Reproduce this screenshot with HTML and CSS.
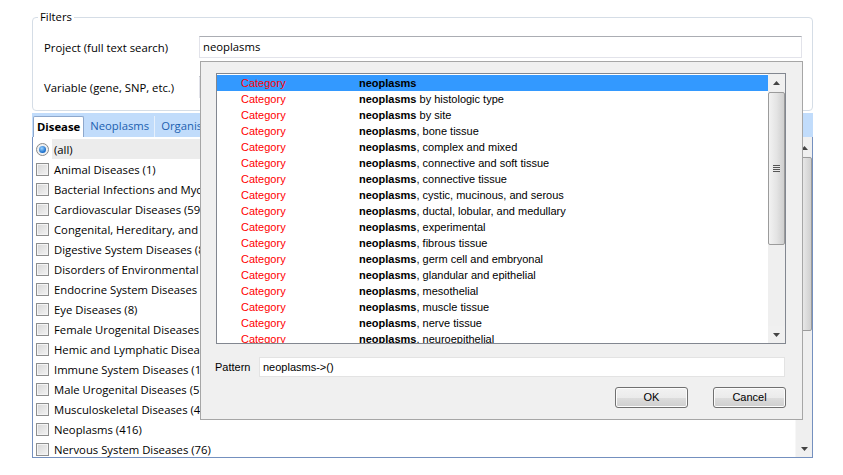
FILE: index.html
```html
<!DOCTYPE html>
<html>
<head>
<meta charset="utf-8">
<link rel="stylesheet" href="styles.css">
</head>
<body>
<div class="page">
  <fieldset class="filters">
    <legend>Filters</legend>
    <div class="frow first"><span class="flabel">Project (full text search)</span><div class="finput">neoplasms</div></div>
    <div class="frow"><span class="flabel">Variable (gene, SNP, etc.)</span><div class="finput"></div></div>
  </fieldset>

  <div class="tabs">
    <div class="tab active">Disease</div>
    <div class="tab">Neoplasms</div>
    <div class="tab">Organisms</div>
    <div class="tab">Chemicals and Drugs</div>
  </div>

  <div class="panel">
    <div class="clist">
      <div class="crow sel"><span class="radio"><span class="dot"></span></span><span class="ctext">(all)</span></div>
      <div class="crow"><span class="cb"></span><span class="ctext">Animal Diseases (1)</span></div>
      <div class="crow"><span class="cb"></span><span class="ctext">Bacterial Infections and Mycoses (12)</span></div>
      <div class="crow"><span class="cb"></span><span class="ctext">Cardiovascular Diseases (59)</span></div>
      <div class="crow"><span class="cb"></span><span class="ctext">Congenital, Hereditary, and Neonatal Diseases and Abnormalities (23)</span></div>
      <div class="crow"><span class="cb"></span><span class="ctext">Digestive System Diseases (85)</span></div>
      <div class="crow"><span class="cb"></span><span class="ctext">Disorders of Environmental Origin (3)</span></div>
      <div class="crow"><span class="cb"></span><span class="ctext">Endocrine System Diseases (40)</span></div>
      <div class="crow"><span class="cb"></span><span class="ctext">Eye Diseases (8)</span></div>
      <div class="crow"><span class="cb"></span><span class="ctext">Female Urogenital Diseases and Pregnancy Complications (31)</span></div>
      <div class="crow"><span class="cb"></span><span class="ctext">Hemic and Lymphatic Diseases (18)</span></div>
      <div class="crow"><span class="cb"></span><span class="ctext">Immune System Diseases (14)</span></div>
      <div class="crow"><span class="cb"></span><span class="ctext">Male Urogenital Diseases (57)</span></div>
      <div class="crow"><span class="cb"></span><span class="ctext">Musculoskeletal Diseases (42)</span></div>
      <div class="crow"><span class="cb"></span><span class="ctext">Neoplasms (416)</span></div>
      <div class="crow"><span class="cb"></span><span class="ctext">Nervous System Diseases (76)</span></div>
    </div>
    <div class="vscroll big">
      <div class="sbtn"><svg width="7" height="4" viewBox="0 0 7 4"><polygon points="3.5,0 7,4 0,4" fill="#444"/></svg></div>
      <div class="track">
        <div class="thumb t-big"></div>
      </div>
      <div class="sbtn"><svg width="7" height="4" viewBox="0 0 7 4"><polygon points="0,0 7,0 3.5,4" fill="#444"/></svg></div>
    </div>
  </div>

  <div class="popup">
    <div class="plist">
      <div class="prows">
        <div class="prow hl"><span class="pcat">Category</span><span class="pname"><b>neoplasms</b></span></div>
        <div class="prow"><span class="pcat">Category</span><span class="pname"><b>neoplasms</b> by histologic type</span></div>
        <div class="prow"><span class="pcat">Category</span><span class="pname"><b>neoplasms</b> by site</span></div>
        <div class="prow"><span class="pcat">Category</span><span class="pname"><b>neoplasms</b>, bone tissue</span></div>
        <div class="prow"><span class="pcat">Category</span><span class="pname"><b>neoplasms</b>, complex and mixed</span></div>
        <div class="prow"><span class="pcat">Category</span><span class="pname"><b>neoplasms</b>, connective and soft tissue</span></div>
        <div class="prow"><span class="pcat">Category</span><span class="pname"><b>neoplasms</b>, connective tissue</span></div>
        <div class="prow"><span class="pcat">Category</span><span class="pname"><b>neoplasms</b>, cystic, mucinous, and serous</span></div>
        <div class="prow"><span class="pcat">Category</span><span class="pname"><b>neoplasms</b>, ductal, lobular, and medullary</span></div>
        <div class="prow"><span class="pcat">Category</span><span class="pname"><b>neoplasms</b>, experimental</span></div>
        <div class="prow"><span class="pcat">Category</span><span class="pname"><b>neoplasms</b>, fibrous tissue</span></div>
        <div class="prow"><span class="pcat">Category</span><span class="pname"><b>neoplasms</b>, germ cell and embryonal</span></div>
        <div class="prow"><span class="pcat">Category</span><span class="pname"><b>neoplasms</b>, glandular and epithelial</span></div>
        <div class="prow"><span class="pcat">Category</span><span class="pname"><b>neoplasms</b>, mesothelial</span></div>
        <div class="prow"><span class="pcat">Category</span><span class="pname"><b>neoplasms</b>, muscle tissue</span></div>
        <div class="prow"><span class="pcat">Category</span><span class="pname"><b>neoplasms</b>, nerve tissue</span></div>
        <div class="prow"><span class="pcat">Category</span><span class="pname"><b>neoplasms</b>, neuroepithelial</span></div>
      </div>
      <div class="vscroll small">
        <div class="sbtn"><svg width="7" height="4" viewBox="0 0 7 4"><polygon points="3.5,0 7,4 0,4" fill="#444"/></svg></div>
        <div class="track">
          <div class="thumb t-small"><span class="grip"></span></div>
        </div>
        <div class="sbtn"><svg width="7" height="4" viewBox="0 0 7 4"><polygon points="0,0 7,0 3.5,4" fill="#444"/></svg></div>
      </div>
    </div>
    <div class="prow2">
      <span class="plabel">Pattern</span>
      <div class="pinput">neoplasms-&gt;()</div>
    </div>
    <div class="pbtns">
      <div class="btn">OK</div>
      <div class="btn">Cancel</div>
    </div>
  </div>
</div>
</body>
</html>
```

FILE: styles.css
```css
* { box-sizing: border-box; }
html, body { margin: 0; padding: 0; background: #fff; }
body {
  font-family: "Open Sans", "Noto Sans", sans-serif;
  font-size: 11.3px;
  color: #000;
}
.page {
  position: relative;
  width: 843px;
  height: 475px;
  padding: 10px 30px 0 32px;
  overflow: hidden;
}
.filters {
  margin: 0;
  border: 1px solid #d5dde6;
  border-radius: 4px;
  padding: 0 10px 12px 5px;
  min-width: 0;
  height: 101px;
}
.filters legend {
  padding: 0 2px;
  line-height: 14px;
  font-size: 11.3px;
}
.frow {
  display: flex;
  align-items: center;
  height: 22px;
  margin-top: 18px;
  padding-left: 6px;
}
.frow.first { margin-top: 12px; }
.flabel { width: 155px; flex: none; }
.finput {
  flex: 1;
  height: 22px;
  border: 1px solid #e2e3ea;
  border-top-color: #abadb3;
  padding: 0 3px;
  line-height: 20px;
}
.tabs {
  margin-top: 2px;
  height: 24px;
  background: #c1dcfb;
  display: flex;
  align-items: flex-end;
  padding-left: 1px;
  overflow: hidden;
  white-space: nowrap;
}
.tab {
  height: 21px;
  line-height: 20px;
  padding: 0 5px 0 6px;
  color: #1c5fb0;
  border-right: 1px solid #e6f0fc;
}
.tab.active {
  background: #fff;
  color: #000;
  font-weight: bold;
  padding: 0 3px 0 3px;
  border: 1px solid #8ea8cc;
  border-bottom: none;
  border-radius: 2px 2px 0 0;
}
.panel {
  height: 321px;
  border: 1px solid #7490bf;
  border-top: none;
  display: flex;
}
.clist {
  flex: 1;
  padding-top: 2px;
  overflow: hidden;
}
.crow {
  display: flex;
  align-items: center;
  height: 20px;
  padding-left: 3px;
  white-space: nowrap;
}
.crow .ctext {
  margin-left: 5px;
  height: 20px;
  line-height: 21px;
}
.crow.sel .ctext { background: #ececec; flex: 1; margin-left: 3px; padding-left: 2px; }
.cb {
  width: 13px;
  height: 13px;
  flex: none;
  border: 1px solid #8e8f8f;
  background: linear-gradient(135deg, #d6d6d6, #f4f4f4);
  box-shadow: inset 0 0 0 1px #f4f4f4;
}
.radio {
  width: 13px;
  height: 13px;
  flex: none;
  border: 1px solid #8a8a8a;
  border-radius: 50%;
  background: #eef0f2;
  display: flex;
  align-items: center;
  justify-content: center;
}
.radio .dot {
  width: 7px;
  height: 7px;
  border-radius: 50%;
  background: radial-gradient(circle at 40% 35%, #9ad3ff, #1569c7 70%);
}
.vscroll {
  width: 17px;
  flex: none;
  display: flex;
  flex-direction: column;
  background: #f0f0f0;
  border-left: 1px solid #f7f7f7;
}
.vscroll.big { padding-top: 2px; }
.sbtn {
  height: 17px;
  display: flex;
  align-items: center;
  justify-content: center;
  flex: none;
}
.track {
  flex: 1;
  background: #efefef;
  position: relative;
}
.thumb {
  margin: 1px 0 0 0;
  border: 1px solid #9b9b9b;
  border-radius: 2px;
  background: linear-gradient(90deg, #f2f2f2, #e4e4e4 50%, #cfcfcf);
  display: flex;
  align-items: center;
  justify-content: center;
}
.t-big { height: 174px; }
.t-small { height: 153px; }
.grip {
  width: 7px;
  height: 7px;
  background: repeating-linear-gradient(180deg, #555 0 1px, #e8e8e8 1px 2px);
}
.popup {
  position: absolute;
  left: 200px;
  top: 61px;
  width: 603px;
  height: 359px;
  background: #f0f0f0;
  border: 1px solid #a6a6a6;
  padding: 11px 16px 0 15px;
  font-family: "Liberation Sans", Arial, sans-serif;
  font-size: 11px;
}
.plist {
  width: 570px;
  height: 271px;
  border: 1px solid #828790;
  background: #fff;
  display: flex;
  overflow: hidden;
}
.prows {
  flex: 1;
  padding-top: 1px;
  overflow: hidden;
}
.prow {
  height: 16px;
  line-height: 16px;
  display: flex;
  white-space: nowrap;
}
.prow.hl { background: #3399ff; }
.pcat {
  color: #ff0000;
  width: 142px;
  padding-left: 24px;
  flex: none;
}
.pname b { font-weight: bold; }
.vscroll.small { border-left: none; }
.prow2 {
  display: flex;
  align-items: center;
  margin-top: 13px;
  height: 20px;
}
.plabel { width: 44px; flex: none; margin-left: -1px; }
.pinput {
  width: 526px;
  height: 20px;
  background: #fff;
  border: 1px solid #e3e3e3;
  line-height: 18px;
  padding-left: 3px;
}
.pbtns {
  display: flex;
  justify-content: flex-end;
  gap: 25px;
  margin-top: 10px;
  width: 570px;
}
.btn {
  width: 73px;
  height: 21px;
  border: 1px solid #707070;
  border-radius: 3px;
  background: linear-gradient(180deg, #f2f2f2 0%, #ebebeb 50%, #dddddd 51%, #cfcfcf 100%);
  box-shadow: inset 0 0 0 1px #fcfcfc;
  text-align: center;
  line-height: 19px;
}
```
